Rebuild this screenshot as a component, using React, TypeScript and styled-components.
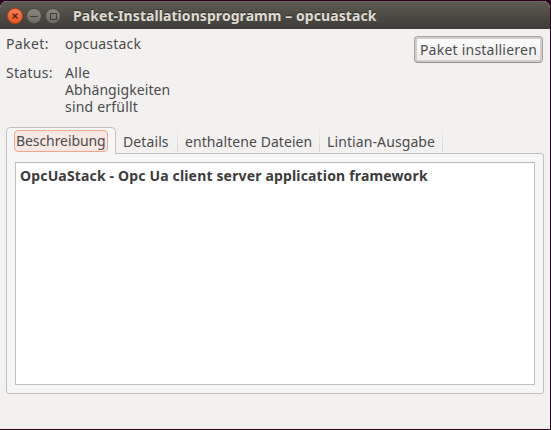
import React from 'react';
import styled, { createGlobalStyle } from 'styled-components';

const GlobalStyle = createGlobalStyle`
  * { box-sizing: border-box; }
  body { margin: 0; background: #2c001e; overflow: hidden; }
`;

const Window = styled.main`
  width: 550px;
  height: 428px;
  margin-top: 1px;
  display: flex;
  flex-direction: column;
  background: #f2f1f0;
  border-radius: 7px 7px 0 0;
  overflow: hidden;
  color: #4c4c4c;
  font: 14px/17px 'Noto Sans', sans-serif;
  white-space: nowrap;
`;

const TitleBar = styled.header`
  height: 28px;
  flex: none;
  display: flex;
  align-items: center;
  gap: 3px;
  padding: 0 0 0 7px;
  background: linear-gradient(#5c5a50, #3d3c37);
  border-top: 1px solid #69675e;
`;

const WindowButton = styled.button<{ $close?: boolean }>`
  width: 16px;
  height: 16px;
  padding: 0;
  border: 1px solid ${p => (p.$close ? '#b8451f' : '#4a4943')};
  border-radius: 50%;
  background: ${p => (p.$close ? 'linear-gradient(#fa8058, #e9541f)' : 'linear-gradient(#8a887e, #6d6b63)')};
  svg { display: block; }
`;

const Title = styled.h1`
  margin: 0 0 0 9px;
  font-size: 14px;
  line-height: 17px;
  letter-spacing: 0.07px;
  color: #dfdbd2;
  text-shadow: 0 -1px #33322e;
`;

const Summary = styled.section`
  height: 98px;
  flex: none;
  display: flex;
  justify-content: space-between;
  padding: 6px 7px 0 6px;
`;

const Fields = styled.dl`
  display: grid;
  grid-template-columns: 59px 120px;
  row-gap: 12px;
  align-content: start;
  margin: 0;
`;

const Label = styled.dt<{ $track?: number }>`
  letter-spacing: ${p => p.$track ?? 0}px;
`;

const Value = styled.dd`
  margin: 0;
`;

const Line = styled.span<{ $track?: number }>`
  display: block;
  letter-spacing: ${p => p.$track ?? 0}px;
`;

const InstallButton = styled.button`
  width: 129px;
  height: 27px;
  margin-top: 1px;
  padding: 0;
  color: #4c4c4c;
  font: inherit;
  letter-spacing: 0.23px;
  border: 1px solid #a6a5a3;
  border-bottom-color: #929190;
  border-radius: 4px;
  background: linear-gradient(#fdfdfd, #eeedec);
  box-shadow: inset 0 0 0 2px #cfcecd;
`;

const Notebook = styled.section`
  margin: 0 6px;
`;

const TabList = styled.div`
  height: 26px;
  display: flex;
  align-items: flex-end;
`;

const Tab = styled.button<{ $width: number; $track: number }>`
  width: ${p => p.$width}px;
  height: 24px;
  margin: 0 0 1px;
  padding: 3px 0 0 7px;
  border: solid;
  border-width: 0 1px 0 0;
  border-image: linear-gradient(#f2f1f0, #d3d1cf) 1;
  background: none;
  color: #4c4c4c;
  font: inherit;
  text-align: left;
  letter-spacing: ${p => p.$track}px;
`;

const ActiveTab = styled.button`
  position: relative;
  z-index: 1;
  width: 110px;
  height: 27px;
  margin-bottom: -1px;
  padding: 2px 7px;
  border: 1px solid #c4c0bc;
  border-bottom: 0;
  border-radius: 5px 5px 0 0;
  background: #f6f6f6;
  color: #4c4c4c;
  font: inherit;
`;

const FocusRing = styled.span`
  display: block;
  width: 94px;
  height: 22px;
  padding: 1px 0 0 1px;
  border: 1px solid #f2a78b;
  border-radius: 4px;
  background: #f7e8e3;
  text-align: left;
  letter-spacing: -0.08px;
`;

const Page = styled.div`
  height: 241px;
  padding: 8px;
  border: 1px solid #c4c0bc;
  border-radius: 0 3px 3px 3px;
  background: #f6f6f6;
`;

const Description = styled.div`
  height: 223px;
  padding: 4px;
  border: 1px solid #c2c0bd;
  border-top-color: #b8b6b3;
  background: #fff;
  color: #3c3c3c;
  font-weight: 700;
  letter-spacing: 0.16px;
`;

const tabs = [
  { name: 'Details', width: 62, track: 0.1 },
  { name: 'enthaltene Dateien', width: 142, track: 0.07 },
  { name: 'Lintian-Ausgabe', width: 123, track: 0.1 },
];

export default function App() {
  return (
    <>
      <GlobalStyle />
      <Window>
        <TitleBar>
          <WindowButton $close aria-label="Schließen">
            <svg width="14" height="14" stroke="#4b2516" strokeWidth="1.3"><path d="M4.5 4.5l5 5m0-5l-5 5" /></svg>
          </WindowButton>
          <WindowButton aria-label="Minimieren">
            <svg width="14" height="14" stroke="#3b3a35"><path d="M3.5 7.5h7" /></svg>
          </WindowButton>
          <WindowButton aria-label="Maximieren">
            <svg width="14" height="14" fill="none" stroke="#3b3a35"><path d="M4.5 4.5h6v6h-6z" /></svg>
          </WindowButton>
          <Title>Paket-Installationsprogramm – opcuastack</Title>
        </TitleBar>
        <Summary>
          <Fields>
            <Label $track={0.4}>Paket:</Label>
            <Value><Line $track={0.2}>opcuastack</Line></Value>
            <Label $track={0.3}>Status:</Label>
            <Value>
              <Line $track={0.3}>Alle</Line>
              <Line $track={0.08}>Abhängigkeiten</Line>
              <Line $track={0.2}>sind erfüllt</Line>
            </Value>
          </Fields>
          <InstallButton>Paket installieren</InstallButton>
        </Summary>
        <Notebook>
          <TabList role="tablist">
            <ActiveTab role="tab" aria-selected><FocusRing>Beschreibung</FocusRing></ActiveTab>
            {tabs.map(t => (
              <Tab key={t.name} role="tab" $width={t.width} $track={t.track}>{t.name}</Tab>
            ))}
          </TabList>
          <Page>
            <Description>OpcUaStack - Opc Ua client server application framework</Description>
          </Page>
        </Notebook>
      </Window>
    </>
  );
}
